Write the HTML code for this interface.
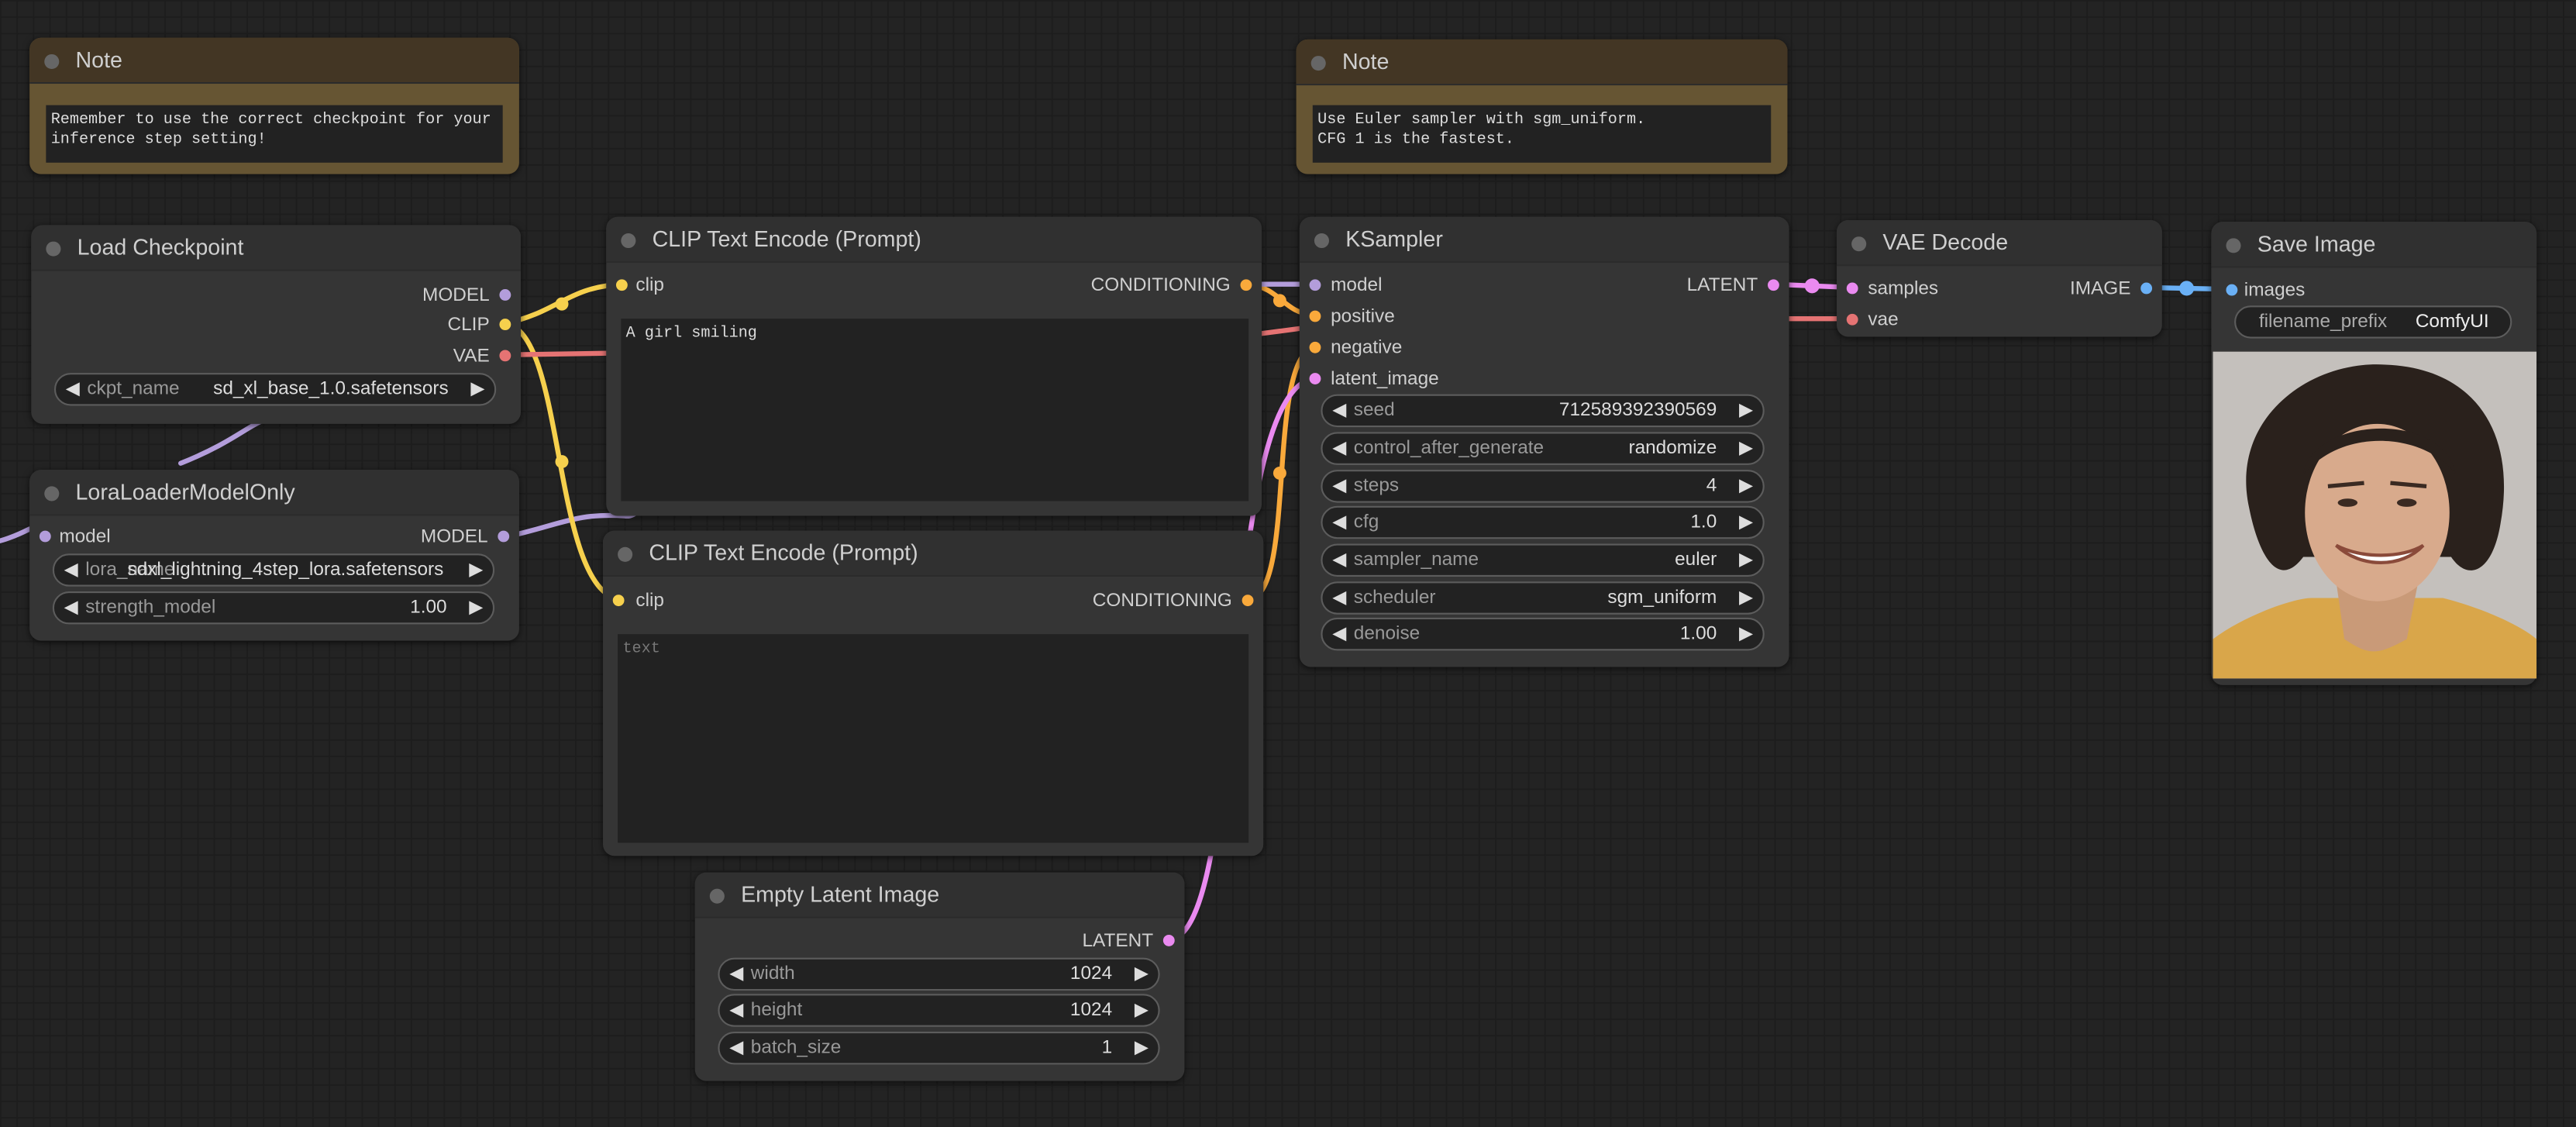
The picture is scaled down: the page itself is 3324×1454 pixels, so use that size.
<!DOCTYPE html>
<html><head><meta charset="utf-8"><style>
*{margin:0;padding:0;box-sizing:border-box}
html,body{width:3324px;height:1454px;overflow:hidden;background:#222}
#s{position:absolute;left:0;top:0;width:1568px;height:686px;transform:scale(2.1199,2.1195);transform-origin:0 0;
background-color:#232323;
background-image:linear-gradient(#1d1d1d 1px,transparent 1px),linear-gradient(90deg,#1d1d1d 1px,transparent 1px);
background-size:10px 10px;font-family:"Liberation Sans",sans-serif;}
.n{position:absolute;background:#353535;border-radius:7px;box-shadow:0 1px 4px rgba(0,0,0,.6)}
.t{height:28px;background:#303030;border-radius:7px 7px 0 0;border-bottom:1px solid #2b2b2b;color:#cfcfcf;font-size:13.5px;line-height:28px;padding-left:28px;position:relative}
.t:before{content:"";position:absolute;left:9px;top:10px;width:9px;height:9px;border-radius:50%;background:#666}
.l{position:absolute;font-size:11.5px;color:#cfcfcf;line-height:14px}
.d{position:absolute;width:7px;height:7px;border-radius:50%}
.w{position:absolute;height:20px;border-radius:10px;background:#222;border:1px solid #5c5c5c;font-size:11.5px;line-height:18px;color:#999}
.w .a{position:absolute;left:6px;color:#ddd;font-size:11px}
.w .b{position:absolute;right:6px;color:#ddd;font-size:11px}
.w .k{position:absolute;left:19px}
.w .v{position:absolute;right:28px;color:#ddd}
.ta{position:absolute;background:#222;font-family:"Liberation Mono",monospace;font-size:9.5px;color:#ddd;padding:3px 3px;line-height:12px}
.note .t{background:#433624}
.note{background:#665533}
</style></head><body><div id="s">
<svg width="1568" height="686" style="position:absolute;left:0;top:0">
<g fill="none" stroke-width="3" stroke-linecap="round">
<path d="M110 282 C140 270 150 260 160 256" stroke="#b39ddb"/>
<path d="M307 327 C340 320 350 312 380 314 C390 316 395 300 402 290" stroke="#b39ddb"/>
<path d="M18 322 C10 326 0 330 -5 330" stroke="#b39ddb"/>
<path d="M307 197 C340 190 345 175 378 173" stroke="#f6d04d"/>
<path d="M307 197 C345 200 335 360 378 365" stroke="#f6d04d"/>
<path d="M307 216 L370 215" stroke="#e57373"/>
<path d="M768 203 L791 200" stroke="#e57373"/>
<path d="M1089 194 L1118 194" stroke="#e57373"/>
<path d="M759 173 C780 175 780 190 800 192" stroke="#f9a93b"/>
<path d="M759 365 C790 365 770 220 800 211" stroke="#f9a93b"/>
<path d="M711 572 C760 572 740 240 800 230" stroke="#ea8af0"/>
<path d="M1079 173 L1127 175" stroke="#ea8af0"/>
<path d="M1306 175 L1355 176" stroke="#6ab0f5"/>
<path d="M765 173 L800 173" stroke="#b39ddb"/>
</g>
<g>
<circle cx="342" cy="185" r="4" fill="#f6d04d"/><circle cx="342" cy="281" r="4" fill="#f6d04d"/>
<circle cx="779" cy="183" r="4" fill="#f9a93b"/><circle cx="779" cy="288" r="4" fill="#f9a93b"/>
<circle cx="1103" cy="174" r="4.5" fill="#ea8af0"/><circle cx="1331" cy="175.5" r="4.5" fill="#6ab0f5"/>
</g>
</svg>

<div class="n note" style="left:18px;top:23px;width:298px;height:83px"><div class="t">Note</div>
<div class="ta" style="left:10px;top:41px;width:278px;height:35px">Remember to use the correct checkpoint for your<br>inference step setting!</div></div>
<div class="n note" style="left:789px;top:24px;width:299px;height:82px"><div class="t">Note</div>
<div class="ta" style="left:10px;top:40px;width:279px;height:35px">Use Euler sampler with sgm_uniform.<br>CFG 1 is the fastest.</div></div>

<div class="n" style="left:19px;top:137px;width:298px;height:121px"><div class="t">Load Checkpoint</div>
<div class="l" style="right:19px;top:36px">MODEL</div><div class="d" style="right:6px;top:39px;background:#b39ddb"></div>
<div class="l" style="right:19px;top:54px">CLIP</div><div class="d" style="right:6px;top:57px;background:#f6d04d"></div>
<div class="l" style="right:19px;top:73px">VAE</div><div class="d" style="right:6px;top:76px;background:#e57373"></div>
<div class="w" style="left:14px;top:90px;width:269px"><span class="a">◀</span><span class="k">ckpt_name</span><span class="v">sd_xl_base_1.0.safetensors</span><span class="b">▶</span></div></div>

<div class="n" style="left:18px;top:286px;width:298px;height:104px"><div class="t">LoraLoaderModelOnly</div>
<div class="d" style="left:6px;top:37px;background:#b39ddb"></div><div class="l" style="left:18px;top:34px">model</div>
<div class="l" style="right:19px;top:34px">MODEL</div><div class="d" style="right:6px;top:37px;background:#b39ddb"></div>
<div class="w" style="left:14px;top:51px;width:269px"><span class="a">◀</span><span class="k">lora_name</span><span class="v" style="right:30px">sdxl_lightning_4step_lora.safetensors</span><span class="b">▶</span></div>
<div class="w" style="left:14px;top:74px;width:269px"><span class="a">◀</span><span class="k">strength_model</span><span class="v">1.00</span><span class="b">▶</span></div></div>

<div class="n" style="left:369px;top:132px;width:399px;height:182px"><div class="t">CLIP Text Encode (Prompt)</div>
<div class="d" style="left:6px;top:38px;background:#f6d04d"></div><div class="l" style="left:18px;top:35px">clip</div>
<div class="l" style="right:19px;top:35px">CONDITIONING</div><div class="d" style="right:6px;top:38px;background:#f9a93b"></div>
<div class="ta" style="left:9px;top:62px;width:382px;height:111px">A girl smiling</div></div>

<div class="n" style="left:367px;top:323px;width:402px;height:198px"><div class="t">CLIP Text Encode (Prompt)</div>
<div class="d" style="left:6px;top:39px;background:#f6d04d"></div><div class="l" style="left:20px;top:36px">clip</div>
<div class="l" style="right:19px;top:36px">CONDITIONING</div><div class="d" style="right:6px;top:39px;background:#f9a93b"></div>
<div class="ta" style="left:9px;top:63px;width:384px;height:127px;color:#777">text</div></div>

<div class="n" style="left:423px;top:531px;width:298px;height:127px"><div class="t">Empty Latent Image</div>
<div class="l" style="right:19px;top:35px">LATENT</div><div class="d" style="right:6px;top:38px;background:#ea8af0"></div>
<div class="w" style="left:14px;top:52px;width:269px"><span class="a">◀</span><span class="k">width</span><span class="v">1024</span><span class="b">▶</span></div>
<div class="w" style="left:14px;top:74px;width:269px"><span class="a">◀</span><span class="k">height</span><span class="v">1024</span><span class="b">▶</span></div>
<div class="w" style="left:14px;top:97px;width:269px"><span class="a">◀</span><span class="k">batch_size</span><span class="v">1</span><span class="b">▶</span></div></div>

<div class="n" style="left:791px;top:132px;width:298px;height:274px"><div class="t">KSampler</div>
<div class="d" style="left:6px;top:38px;background:#b39ddb"></div><div class="l" style="left:19px;top:35px">model</div>
<div class="l" style="right:19px;top:35px">LATENT</div><div class="d" style="right:6px;top:38px;background:#ea8af0"></div>
<div class="d" style="left:6px;top:57px;background:#f9a93b"></div><div class="l" style="left:19px;top:54px">positive</div>
<div class="d" style="left:6px;top:76px;background:#f9a93b"></div><div class="l" style="left:19px;top:73px">negative</div>
<div class="d" style="left:6px;top:95px;background:#ea8af0"></div><div class="l" style="left:19px;top:92px">latent_image</div>
<div class="w" style="left:13px;top:108px;width:270px"><span class="a">◀</span><span class="k">seed</span><span class="v">712589392390569</span><span class="b">▶</span></div>
<div class="w" style="left:13px;top:131px;width:270px"><span class="a">◀</span><span class="k">control_after_generate</span><span class="v">randomize</span><span class="b">▶</span></div>
<div class="w" style="left:13px;top:154px;width:270px"><span class="a">◀</span><span class="k">steps</span><span class="v">4</span><span class="b">▶</span></div>
<div class="w" style="left:13px;top:176px;width:270px"><span class="a">◀</span><span class="k">cfg</span><span class="v">1.0</span><span class="b">▶</span></div>
<div class="w" style="left:13px;top:199px;width:270px"><span class="a">◀</span><span class="k">sampler_name</span><span class="v">euler</span><span class="b">▶</span></div>
<div class="w" style="left:13px;top:222px;width:270px"><span class="a">◀</span><span class="k">scheduler</span><span class="v">sgm_uniform</span><span class="b">▶</span></div>
<div class="w" style="left:13px;top:244px;width:270px"><span class="a">◀</span><span class="k">denoise</span><span class="v">1.00</span><span class="b">▶</span></div></div>

<div class="n" style="left:1118px;top:134px;width:198px;height:71px"><div class="t">VAE Decode</div>
<div class="d" style="left:6px;top:38px;background:#ea8af0"></div><div class="l" style="left:19px;top:35px">samples</div>
<div class="l" style="right:19px;top:35px">IMAGE</div><div class="d" style="right:6px;top:38px;background:#6ab0f5"></div>
<div class="d" style="left:6px;top:57px;background:#e57373"></div><div class="l" style="left:19px;top:54px">vae</div></div>

<div class="n" style="left:1346px;top:135px;width:198px;height:282px"><div class="t">Save Image</div>
<div class="d" style="left:9px;top:38px;background:#6ab0f5"></div><div class="l" style="left:20px;top:35px">images</div>
<div class="w" style="left:14px;top:51px;width:169px;color:#aaa"><span style="position:absolute;left:14px">filename_prefix</span><span style="position:absolute;right:13px;color:#eee">ComfyUI</span></div>
<svg style="position:absolute;left:1px;top:79px" width="197" height="199" viewBox="0 0 197 199">
<rect width="197" height="199" fill="#c4c0bc"/>
<path d="M0 199 L0 175 C20 160 50 150 60 150 L140 150 C160 155 185 165 197 175 L197 199Z" fill="#d9a64a"/>
<path d="M75 140 L125 140 L118 175 C100 185 95 185 80 175Z" fill="#c99a78"/>
<path d="M22 95 C10 40 60 5 105 8 C160 10 185 50 175 105 C170 135 155 140 145 125 L55 125 C40 145 28 125 22 95Z" fill="#2a211c"/>
<ellipse cx="100" cy="98" rx="44" ry="54" fill="#d8aa8c"/>
<path d="M55 75 C60 40 140 35 148 75 C130 50 80 45 55 75Z" fill="#2a211c"/>
<path d="M75 118 C90 132 115 132 128 118 C115 126 90 126 75 118Z" fill="#fff" stroke="#8a4a3a" stroke-width="2"/>
<ellipse cx="82" cy="92" rx="6" ry="2.5" fill="#3a2a22"/><ellipse cx="118" cy="92" rx="6" ry="2.5" fill="#3a2a22"/>
<path d="M70 82 L92 80 M108 80 L130 82" stroke="#3a2a22" stroke-width="2.5"/>
</svg></div>
</div></body></html>
